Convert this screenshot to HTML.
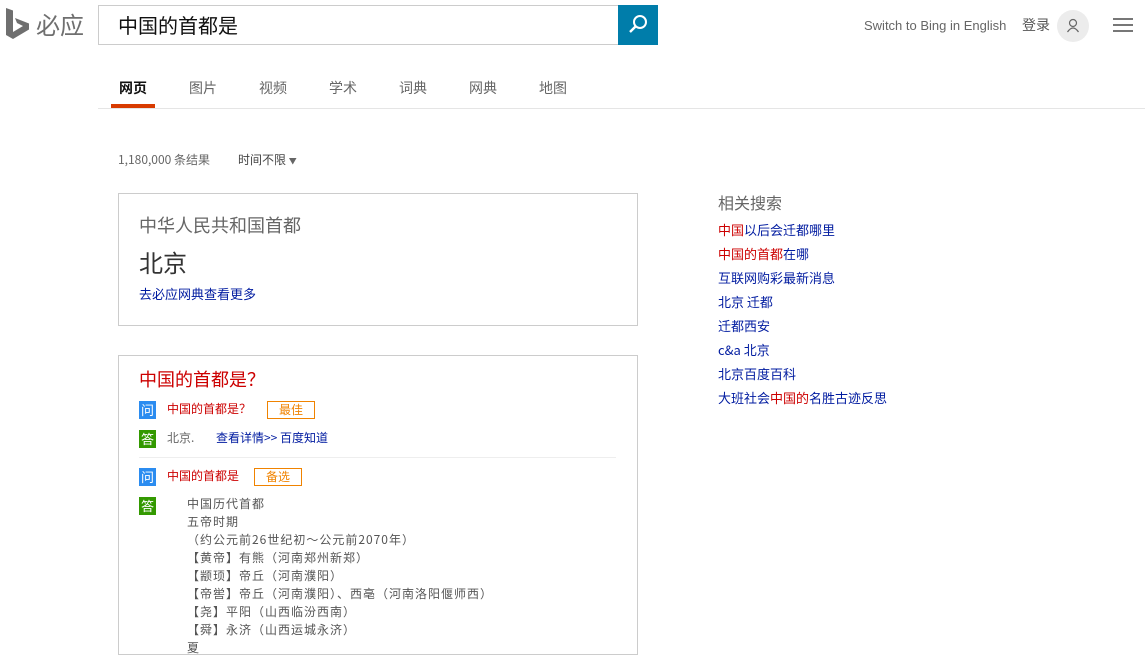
<!DOCTYPE html>
<html><head><meta charset="utf-8"><style>
*{margin:0;padding:0;box-sizing:border-box}
body{width:1145px;height:646px;overflow:hidden;background:#fff;font-family:"Noto Sans CJK SC","Liberation Sans",sans-serif;color:#444;position:relative}
.a{position:absolute;white-space:nowrap}
.b{color:#001ba0}.r{color:#c00}
.l{font-family:"Liberation Sans","Noto Sans CJK SC",sans-serif}
</style></head><body>
<svg class="a" style="left:6px;top:8px" width="24" height="34" viewBox="0 0 24 34"><path d="M0 0 L7 2.5 V24 L17 18 L11 15 L9 10 L23 15.5 V21.5 L7 31 L0 27 Z" fill="#6f6f6f"/></svg>
<div class="a" style="left:36px;top:6px;font-size:24px;color:#6f6f6f">必应</div>
<div class="a" style="left:98px;top:5px;width:521px;height:40px;border:1px solid #ccc;border-right:none"></div>
<div class="a" style="left:118px;top:10px;font-size:20px;color:#111">中国的首都是</div>
<div class="a" style="left:618px;top:5px;width:40px;height:40px;background:#007daa"></div>
<svg class="a" style="left:626px;top:13px" width="24" height="24" viewBox="0 0 24 24"><circle cx="14" cy="9" r="6" fill="none" stroke="#fff" stroke-width="2"/><path d="M10 13 L4 19" stroke="#fff" stroke-width="2.4"/></svg>
<div class="a l" style="left:864px;top:18px;font-size:13px;color:#666">Switch to Bing in English</div>
<div class="a" style="left:1022px;top:15px;font-size:14px;color:#555">登录</div>
<div class="a" style="left:1057px;top:10px;width:32px;height:32px;border-radius:50%;background:#ececec"></div>
<svg class="a" style="left:1063px;top:16px" width="20" height="20" viewBox="0 0 20 20"><circle cx="10" cy="7" r="3.5" fill="none" stroke="#666" stroke-width="1.2"/><path d="M4.5 16 Q10 8 15.5 16" fill="none" stroke="#666" stroke-width="1.2"/></svg>
<div class="a" style="left:1113px;top:18px;width:20px;height:2px;background:#777"></div>
<div class="a" style="left:1113px;top:24px;width:20px;height:2px;background:#777"></div>
<div class="a" style="left:1113px;top:30px;width:20px;height:2px;background:#777"></div>
<div class="a" style="left:98px;top:108px;width:1047px;height:1px;background:#e5e5e5"></div>
<div class="a" style="left:111px;top:104px;width:44px;height:4px;background:#d83b01"></div>
<div class="a" style="left:119px;top:78px;font-size:14px;color:#111;font-weight:bold">网页</div>
<div class="a" style="left:189px;top:78px;font-size:14px;color:#666">图片</div>
<div class="a" style="left:259px;top:78px;font-size:14px;color:#666">视频</div>
<div class="a" style="left:329px;top:78px;font-size:14px;color:#666">学术</div>
<div class="a" style="left:399px;top:78px;font-size:14px;color:#666">词典</div>
<div class="a" style="left:469px;top:78px;font-size:14px;color:#666">网典</div>
<div class="a" style="left:539px;top:78px;font-size:14px;color:#666">地图</div>
<div class="a" style="left:118px;top:151px;font-size:12px;color:#666">1,180,000 条结果</div>
<div class="a" style="left:238px;top:151px;font-size:12px;color:#444">时间不限 <span style="font-size:8px;color:#666">▼</span></div>
<div class="a" style="left:118px;top:193px;width:520px;height:133px;border:1px solid #ccc"></div>
<div class="a" style="left:139px;top:212px;font-size:18px;color:#666">中华人民共和国首都</div>
<div class="a" style="left:139px;top:244px;font-size:24px;color:#333">北京</div>
<div class="a b" style="left:139px;top:284px;font-size:13px">去必应网典查看更多</div>
<div class="a" style="left:118px;top:355px;width:520px;height:300px;border:1px solid #ccc"></div>
<div class="a r" style="left:139px;top:366px;font-size:18px">中国的首都是？</div>
<div class="a" style="left:139px;top:401px;width:17px;height:18px;background:#2b8cf0;color:#fff;font-size:13px;text-align:center;line-height:18px">问</div>
<div class="a r" style="left:167px;top:400px;font-size:12px">中国的首都是？</div>
<div class="a" style="left:267px;top:401px;width:48px;height:18px;border:1px solid #f08300;color:#f08300;font-size:12px;text-align:center;line-height:16px">最佳</div>
<div class="a" style="left:139px;top:430px;width:17px;height:18px;background:#339900;color:#fff;font-size:13px;text-align:center;line-height:18px">答</div>
<div class="a" style="left:167px;top:429px;font-size:12px;color:#666">北京.</div>
<div class="a b" style="left:216px;top:429px;font-size:12px">查看详情&gt;&gt; 百度知道</div>
<div class="a" style="left:139px;top:457px;width:477px;height:1px;background:#eee"></div>
<div class="a" style="left:139px;top:468px;width:17px;height:18px;background:#2b8cf0;color:#fff;font-size:13px;text-align:center;line-height:18px">问</div>
<div class="a r" style="left:167px;top:467px;font-size:12px">中国的首都是</div>
<div class="a" style="left:254px;top:468px;width:48px;height:18px;border:1px solid #f08300;color:#f08300;font-size:12px;text-align:center;line-height:16px">备选</div>
<div class="a" style="left:139px;top:497px;width:17px;height:18px;background:#339900;color:#fff;font-size:13px;text-align:center;line-height:18px">答</div>
<div class="a" style="left:187px;top:495px;font-size:12px;color:#555;line-height:18px;letter-spacing:1px">中国历代首都<br>五帝时期<br>（约公元前26世纪初～公元前2070年）<br>【黄帝】有熊（河南郑州新郑）<br>【颛顼】帝丘（河南濮阳）<br>【帝喾】帝丘（河南濮阳）、西亳（河南洛阳偃师西）<br>【尧】平阳（山西临汾西南）<br>【舜】永济（山西运城永济）<br>夏</div>
<div class="a" style="left:718px;top:190px;font-size:16px;color:#666">相关搜索</div>
<div class="a b" style="left:718px;top:218px;font-size:13px;line-height:24px"><span class="r">中国</span>以后会迁都哪里<br><span class="r">中国的首都</span>在哪<br>互联网购彩最新消息<br>北京 迁都<br>迁都西安<br>c&amp;a 北京<br>北京百度百科<br>大班社会<span class="r">中国的</span>名胜古迹反思</div>
</body></html>
